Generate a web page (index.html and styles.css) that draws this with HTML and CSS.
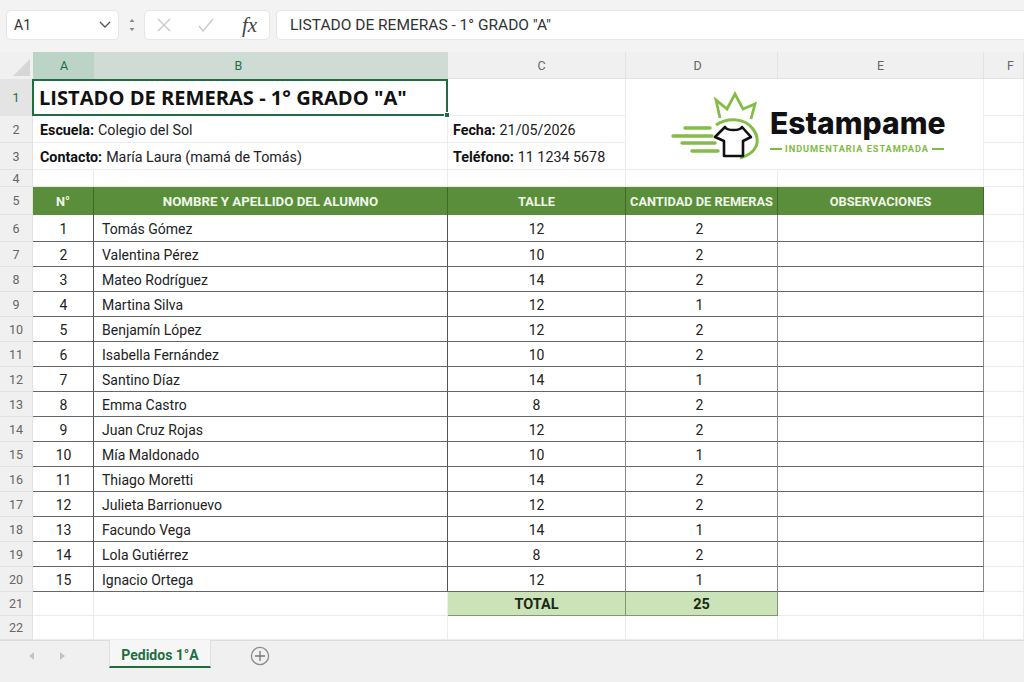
FILE: index.html
```html
<!DOCTYPE html>
<html lang="en">
<head>
    <meta charset="UTF-8">
    <meta name="viewport" content="width=device-width, initial-scale=1.0">
    <title>Pedidos 1°A</title>
    <link rel="stylesheet" href="styles.css">
</head>
<body>
    <div class="formula-bar">
        <div class="box name-box">
            <span>A1</span>
            <svg width="14" height="10" viewBox="0 0 14 10"><path d="M2 2l5 5 5-5" fill="none" stroke="#555" stroke-width="1.4"/></svg>
        </div>
        <svg class="grip" width="6" height="14" viewBox="0 0 6 14"><path d="M3 1l2.5 3h-5zM3 13L.5 10h5z" fill="#888"/></svg>
        <div class="box fx-box">
            <svg width="14" height="14" viewBox="0 0 14 14"><path d="M1 1l12 12M13 1L1 13" stroke="#c9c9c9" stroke-width="1.4"/></svg>
            <svg width="16" height="14" viewBox="0 0 16 14"><path d="M1 8l4 5L15 1" fill="none" stroke="#c9c9c9" stroke-width="1.4"/></svg>
            <span class="fx">fx</span>
        </div>
        <div class="box formula">LISTADO DE REMERAS - 1° GRADO "A"</div>
    </div>

    <div class="sheet">
        <!-- column headers -->
        <div class="corner"><span class="tri"></span></div>
        <div class="col col-a">A</div>
        <div class="col col-b">B</div>
        <div class="col col-c">C</div>
        <div class="col col-d">D</div>
        <div class="col">E</div>
        <div class="col col-f">F</div>

        <!-- rows 1-4 -->
        <div class="row row-on">1</div>
        <div class="cell title">LISTADO DE REMERAS - 1° GRADO "A"<i class="handle"></i></div>
        <div class="cell"></div>
        <div class="logo">
            <svg width="110" height="85" viewBox="0 0 110 85" fill="none">
                <path d="M60 33L56 15l11 9 8-15 8 15 12-5-4 15" stroke="#84bc48" stroke-width="2.8"/>
                <path d="M56 40C68 32 85 33 93 44C101 55 98 68 80 73" stroke="#84bc48" stroke-width="3"/>
                <path d="M25 43h25M13 51h39M22 58h33M32 66h26" stroke="#84bc48" stroke-width="3.4" stroke-linecap="round"/>
                <path d="M65 42c2 4 15 4 17 0l9 10-8 4v15H64V56l-9-4z" fill="#fff" stroke="#111" stroke-width="2.6" stroke-linejoin="round"/>
            </svg>
            <div class="brand">
                <div class="brand-name">Estampame</div>
                <div class="brand-sub"><b></b>INDUMENTARIA ESTAMPADA<b></b></div>
            </div>
        </div>
        <div class="cell"></div>

        <div class="row">2</div>
        <div class="cell info wide"><strong>Escuela:</strong> Colegio del Sol</div>
        <div class="cell info"><strong>Fecha:</strong> 21/05/2026</div>
        <div class="cell"></div>

        <div class="row">3</div>
        <div class="cell info wide"><strong>Contacto:</strong> María Laura (mamá de Tomás)</div>
        <div class="cell info"><strong>Teléfono:</strong> 11 1234 5678</div>
        <div class="cell"></div>

        <div class="row">4</div>
        <div class="cell"></div><div class="cell"></div><div class="cell"></div><div class="cell"></div><div class="cell"></div><div class="cell"></div>

        <!-- table head -->
        <div class="row">5</div>
        <div class="th">N°</div>
        <div class="th th-name">NOMBRE Y APELLIDO DEL ALUMNO</div>
        <div class="th">TALLE</div>
        <div class="th">CANTIDAD DE REMERAS</div>
        <div class="th">OBSERVACIONES</div>
        <div class="cell"></div>

        <!-- table body -->
        <div class="row">6</div><div class="td num first">1</div><div class="td name">Tomás Gómez</div><div class="td num">12</div><div class="td num qty">2</div><div class="td"></div><div class="cell"></div>
        <div class="row">7</div><div class="td num first">2</div><div class="td name">Valentina Pérez</div><div class="td num">10</div><div class="td num qty">2</div><div class="td"></div><div class="cell"></div>
        <div class="row">8</div><div class="td num first">3</div><div class="td name">Mateo Rodríguez</div><div class="td num">14</div><div class="td num qty">2</div><div class="td"></div><div class="cell"></div>
        <div class="row">9</div><div class="td num first">4</div><div class="td name">Martina Silva</div><div class="td num">12</div><div class="td num qty">1</div><div class="td"></div><div class="cell"></div>
        <div class="row">10</div><div class="td num first">5</div><div class="td name">Benjamín López</div><div class="td num">12</div><div class="td num qty">2</div><div class="td"></div><div class="cell"></div>
        <div class="row">11</div><div class="td num first">6</div><div class="td name">Isabella Fernández</div><div class="td num">10</div><div class="td num qty">2</div><div class="td"></div><div class="cell"></div>
        <div class="row">12</div><div class="td num first">7</div><div class="td name">Santino Díaz</div><div class="td num">14</div><div class="td num qty">1</div><div class="td"></div><div class="cell"></div>
        <div class="row">13</div><div class="td num first">8</div><div class="td name">Emma Castro</div><div class="td num">8</div><div class="td num qty">2</div><div class="td"></div><div class="cell"></div>
        <div class="row">14</div><div class="td num first">9</div><div class="td name">Juan Cruz Rojas</div><div class="td num">12</div><div class="td num qty">2</div><div class="td"></div><div class="cell"></div>
        <div class="row">15</div><div class="td num first">10</div><div class="td name">Mía Maldonado</div><div class="td num">10</div><div class="td num qty">1</div><div class="td"></div><div class="cell"></div>
        <div class="row">16</div><div class="td num first">11</div><div class="td name">Thiago Moretti</div><div class="td num">14</div><div class="td num qty">2</div><div class="td"></div><div class="cell"></div>
        <div class="row">17</div><div class="td num first">12</div><div class="td name">Julieta Barrionuevo</div><div class="td num">12</div><div class="td num qty">2</div><div class="td"></div><div class="cell"></div>
        <div class="row">18</div><div class="td num first">13</div><div class="td name">Facundo Vega</div><div class="td num">14</div><div class="td num qty">1</div><div class="td"></div><div class="cell"></div>
        <div class="row">19</div><div class="td num first">14</div><div class="td name">Lola Gutiérrez</div><div class="td num">8</div><div class="td num qty">2</div><div class="td"></div><div class="cell"></div>
        <div class="row">20</div><div class="td num first">15</div><div class="td name">Ignacio Ortega</div><div class="td num">12</div><div class="td num qty">1</div><div class="td"></div><div class="cell"></div>

        <!-- total -->
        <div class="row">21</div>
        <div class="cell"></div><div class="cell"></div>
        <div class="total">TOTAL</div>
        <div class="total">25</div>
        <div class="cell"></div><div class="cell"></div>

        <div class="row">22</div>
        <div class="cell"></div><div class="cell"></div><div class="cell"></div><div class="cell"></div><div class="cell"></div><div class="cell"></div>
    </div>

    <div class="tabs">
        <svg class="nav" width="40" height="10" viewBox="0 0 40 10"><path d="M7 1v8L2 5zM33 1v8l5-4z" fill="#c4c4c4"/></svg>
        <div class="tab">Pedidos 1°A</div>
        <svg class="add" width="20" height="20" viewBox="0 0 20 20" fill="none"><circle cx="10" cy="10" r="8.6" stroke="#8a8a8a" stroke-width="1.3"/><path d="M10 5v10M5 10h10" stroke="#777" stroke-width="1.3"/></svg>
    </div>
</body>
</html>
```
FILE: styles.css
```css
* {
    box-sizing: border-box;
}
body {
    margin: 0;
    width: 1024px;
    height: 682px;
    overflow: hidden;
    background-color: #f3f3f3;
    font-family: Roboto, Arial, sans-serif;
    color: #222;
}

/* formula bar */
.formula-bar {
    display: flex;
    align-items: center;
    height: 52px;
    padding: 0 0 2px 6px;
}
.box {
    display: flex;
    align-items: center;
    height: 30px;
    background-color: #fff;
    border: 1px solid #e6e6e6;
    border-radius: 5px;
}
.name-box {
    width: 113px;
    justify-content: space-between;
    padding: 0 6px 0 7px;
    font-size: 14px;
    color: #333;
}
.grip {
    margin: 0 9px 0 10px;
}
.fx-box {
    width: 126px;
    gap: 27px;
    padding-left: 12px;
}
.fx {
    margin-left: 1px;
    font-family: "Liberation Serif", serif;
    font-style: italic;
    font-size: 21px;
    color: #444;
}
.formula {
    flex: 1;
    margin-left: 6px;
    padding-left: 13px;
    border-right: none;
    border-radius: 5px 0 0 5px;
    font-size: 15.5px;
    color: #333;
}

/* sheet grid */
.sheet {
    display: grid;
    grid-template-columns: 33px 61px 354px 178px 152px 206px 40px;
    grid-template-rows: 27px 37px 27px 27px 17px 28px 27px repeat(14, 25px) 24px 24px;
    background-color: #fff;
}
.corner {
    display: flex;
    align-items: flex-end;
    justify-content: flex-end;
    padding: 0 3px 3px 0;
    background-color: #f0f0f0;
}
.tri {
    width: 0;
    height: 0;
    border-left: 17px solid transparent;
    border-bottom: 17px solid #d6d6d6;
}
.col, .row {
    display: flex;
    align-items: center;
    justify-content: center;
    font-size: 12.5px;
    color: #666;
    background-color: #f0f0f0;
    border-right: 1px solid #e2e2e2;
    border-bottom: 1px solid #e2e2e2;
}
.col-a {
    padding-left: 1px;
    background-color: #bcd4c7;
    color: #1e6e42;
    border: none;
}
.col-b {
    padding-right: 65px;
    background-color: #cfdbd5;
    color: #1e6e42;
    border: none;
}
.col-c {
    padding-left: 10px;
}
.col-d {
    padding-right: 8px;
}
.col-f {
    padding-left: 14px;
}
.row-on {
    background-color: #e4e4e4;
    color: #1e6e42;
}
.cell {
    border-right: 1px solid #ececec;
    border-bottom: 1px solid #ececec;
}
.title {
    position: relative;
    grid-column: span 2;
    display: flex;
    align-items: center;
    margin-left: -1px;
    padding-left: 5px;
    border: 2px solid #1e6e42;
    font-family: "Open Sans", Arial, sans-serif;
    font-weight: 700;
    font-size: 20.1px;
    color: #111;
    white-space: nowrap;
}
.handle {
    position: absolute;
    right: -4px;
    bottom: -4px;
    width: 6px;
    height: 6px;
    background-color: #1e6e42;
    border: 1px solid #fff;
}
.info {
    display: flex;
    align-items: center;
    gap: 4px;
    padding: 1px 0 0 5px;
    font-size: 14.3px;
    white-space: nowrap;
}
.info strong {
    color: #111;
}
.wide {
    grid-column: span 2;
    padding-left: 7px;
}
.logo {
    grid-column: 5 / span 2;
    grid-row: 2 / span 3;
    display: flex;
    align-items: flex-start;
    padding: 6px 0 0 34px;
    border-right: 1px solid #ececec;
    border-bottom: 1px solid #ececec;
}
.brand {
    margin: 20px 0 0 0;
    width: 174px;
}
.brand-name {
    font-family: Inter, Arial, sans-serif;
    font-weight: 800;
    font-size: 30px;
    line-height: 36px;
    color: #111;
    white-space: nowrap;
}
.brand-sub {
    display: flex;
    align-items: center;
    justify-content: space-between;
    margin-top: 2px;
    font-weight: 700;
    font-size: 9.2px;
    letter-spacing: 0.95px;
    color: #7fbc42;
    white-space: nowrap;
}
.brand-sub b {
    width: 12px;
    height: 2px;
    background-color: #7fbc42;
}

/* table */
.th {
    display: flex;
    align-items: center;
    justify-content: center;
    padding-top: 1px;
    background-color: #5a8e3a;
    border-right: 1px solid #3f6b28;
    font-weight: 700;
    font-size: 12.8px;
    color: #eef5e8;
    white-space: nowrap;
}
.th-name {
    font-size: 13.3px;
}
.td {
    display: flex;
    align-items: center;
    padding-top: 2px;
    border-right: 1px solid #8a8a8a;
    border-bottom: 1px solid #666;
    font-size: 14px;
    color: #222;
}
.first, .name {
    border-right-color: #555;
}
.num {
    justify-content: center;
}
.first {
    padding-left: 1px;
}
.qty {
    padding-right: 4px;
}
.name {
    padding-left: 8px;
}
.total {
    display: flex;
    align-items: center;
    justify-content: center;
    padding-top: 2px;
    background-color: #cce2b9;
    border-right: 1px solid #7e9a6c;
    border-bottom: 1px solid #7e9a6c;
    font-weight: 700;
    font-size: 14.5px;
    color: #1c2a14;
}

/* sheet tabs */
.tabs {
    display: flex;
    align-items: flex-start;
    height: 42px;
    padding-left: 27px;
    border-top: 1px solid #dcdcdc;
    background-color: #f0f0f0;
}
.nav {
    margin-top: 10px;
}
.tab {
    display: flex;
    align-items: center;
    justify-content: center;
    width: 102px;
    height: 28px;
    margin: -1px 0 0 42px;
    padding-top: 3px;
    background-color: #f6f6f6;
    border-left: 1px solid #e0e0e0;
    border-right: 1px solid #e0e0e0;
    border-bottom: 2px solid #1e6e42;
    font-weight: 700;
    font-size: 14px;
    color: #1e6e42;
}
.add {
    margin: 5px 0 0 39px;
}
```
